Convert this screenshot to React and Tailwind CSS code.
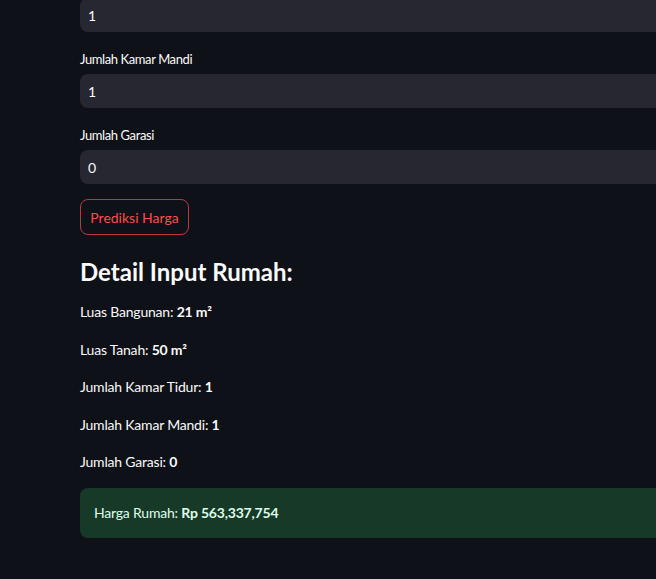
export default function App() {
  const inputs = [
    { label: 'Jumlah Kamar Mandi', value: '1' },
    { label: 'Jumlah Garasi', value: '0' },
  ];
  const details = [
    { label: 'Luas Bangunan:', value: '21 m²' },
    { label: 'Luas Tanah:', value: '50 m²' },
    { label: 'Jumlah Kamar Tidur:', value: '1' },
    { label: 'Jumlah Kamar Mandi:', value: '1' },
    { label: 'Jumlah Garasi:', value: '0' },
  ];

  return (
    <div className="h-[579px] w-[656px] overflow-hidden bg-[#0e1117] text-[#fafafa] font-['Lato',sans-serif]">
      <div className="w-[720px] pl-[80px]">
        {/* Kamar Tidur input (cut at top) */}
        <div className="-mt-[2px] flex h-[34px] items-center rounded-lg bg-[#262730] px-2 text-[14px]">1</div>

        {inputs.map(({ label, value }) => (
          <div key={label}>
            <p className="mt-[19px] mb-[7px] h-[16px] text-[13px] leading-[16px] tracking-[-0.4px]">{label}</p>
            <div className="flex h-[34px] items-center rounded-lg bg-[#262730] px-2 text-[14px]">{value}</div>
          </div>
        ))}

        <button className="mt-[15px] h-[36px] w-[109px] rounded-lg border border-[#ff4b4b]/70 text-[14px] text-[#ff4b4b]">
          Prediksi Harga
        </button>

        <h3 className="mt-[20px] text-[24px] font-bold leading-[34px]">Detail Input Rumah:</h3>

        <div className="mt-[13px]">
          {details.map(({ label, value }) => (
            <p key={label} className="h-[37.5px] text-[14px] leading-[20px] tracking-[-0.2px]">
              {label} <b className="font-bold">{value}</b>
            </p>
          ))}
        </div>

        <div className="-mt-[2px] flex h-[50px] items-center rounded-lg bg-[#173928] px-[14px] text-[14px] tracking-[-0.2px] text-[#dffde9]">
          <span>
            Harga Rumah: <b className="font-bold">Rp 563,337,754</b>
          </span>
        </div>
      </div>
    </div>
  );
}
